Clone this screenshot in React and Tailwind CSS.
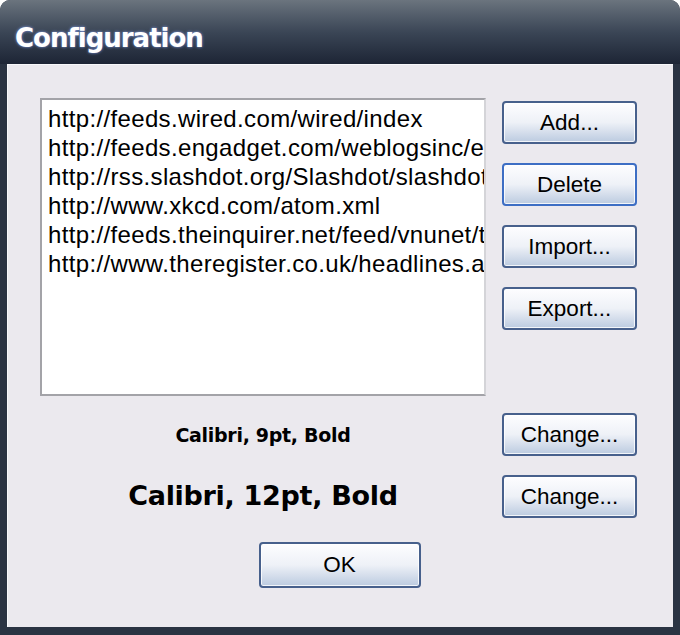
const Btn = ({ children, focused, className = '' }) => (
    <button
        className={`h-[43px] rounded-[4px] border-2 ${focused ? 'border-[#3d6ec4]' : 'border-[#47608c]'} bg-gradient-to-b from-[#fdfdff] via-[#eef1f7] to-[#bccbe0] text-[22.5px] text-black shadow-[inset_0_0_0_1px_rgba(255,255,255,0.8)] ${className}`}
    >
        {children}
    </button>
)

export default function App() {
    const feeds = [
        'http://feeds.wired.com/wired/index',
        'http://feeds.engadget.com/weblogsinc/engadget',
        'http://rss.slashdot.org/Slashdot/slashdot',
        'http://www.xkcd.com/atom.xml',
        'http://feeds.theinquirer.net/feed/vnunet/the_INQUIRER_blog',
        'http://www.theregister.co.uk/headlines.atom',
    ]

    return (
        <div className="w-[680px] h-[635px] flex flex-col bg-[#2a3342] rounded-t-[10px] overflow-hidden font-['Liberation_Sans',Arial,sans-serif]">
            {/* title bar */}
            <div className="h-[64px] flex items-center pl-[15px] bg-gradient-to-b from-[#6b747e] via-[#3b4656] to-[#1d2535]">
                <span className="text-white font-bold text-[26px] font-['DejaVu_Sans',sans-serif] tracking-[-1px] [text-shadow:0_0_3px_rgba(140,170,255,0.9)] mt-[12px]">
                    Configuration
                </span>
            </div>

            {/* body */}
            <div className="flex-1 mx-[7px] mb-[8px] bg-[#ebe9ee] border-t border-l border-[#f8f8fa] pt-[33px] pl-[32px] pr-[36px] flex flex-col">
                <div className="flex gap-[16px]">
                    <div className="w-[446px] h-[298px] bg-white border-2 border-t-[#a3a3a8] border-l-[#a3a3a8] border-r-[#d4d4d8] border-b-[#a3a3a8] pl-[6px] pt-[4px] overflow-hidden">
                        {feeds.map(f => (
                            <div key={f} className="text-[24px] leading-[29px] tracking-[0.35px] whitespace-nowrap text-black">{f}</div>
                        ))}
                    </div>
                    <div className="flex flex-col gap-[19px] pt-[3px]">
                        <Btn className="w-[135px]">Add...</Btn>
                        <Btn focused className="w-[135px]">Delete</Btn>
                        <Btn className="w-[135px]">Import...</Btn>
                        <Btn className="w-[135px]">Export...</Btn>
                    </div>
                </div>

                <div className="flex items-center gap-[16px] mt-[17px]">
                    <div className="w-[446px] text-center font-bold text-[19px] font-['DejaVu_Sans',sans-serif] tracking-[-0.3px] pt-[1px]">Calibri, 9pt, Bold</div>
                    <Btn className="w-[135px]">Change...</Btn>
                </div>
                <div className="flex items-center gap-[16px] mt-[19px]">
                    <div className="w-[446px] text-center font-bold text-[27px] font-['DejaVu_Sans',sans-serif] tracking-[-0.3px]">Calibri, 12pt, Bold</div>
                    <Btn className="w-[135px]">Change...</Btn>
                </div>

                <div className="flex justify-center mt-[24px] pl-[2px]">
                    <Btn className="w-[162px] h-[46px]">OK</Btn>
                </div>
            </div>
        </div>
    )
}
